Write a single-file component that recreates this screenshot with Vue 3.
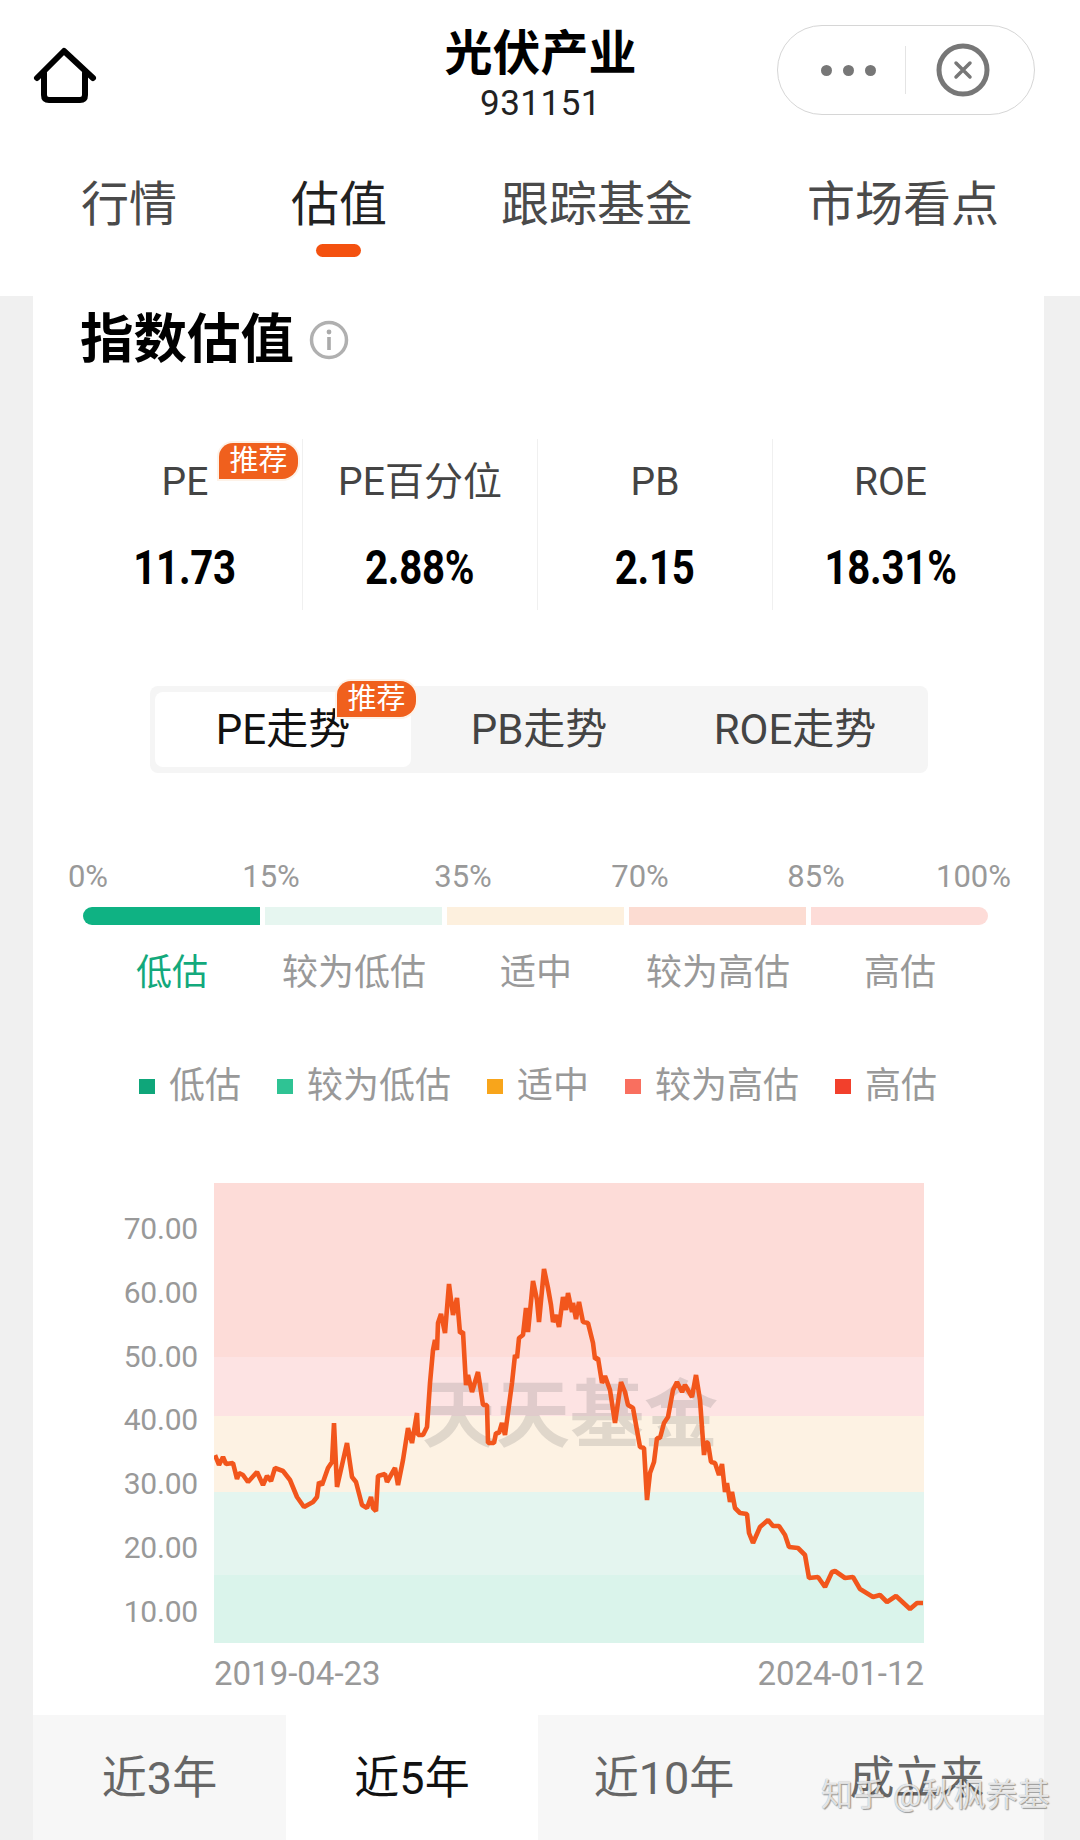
<script setup>
const tabs = [
  { label: '行情' },
  { label: '估值', active: true },
  { label: '跟踪基金' },
  { label: '市场看点' },
]
const metrics = [
  { label: 'PE', value: '11.73', badge: true },
  { label: 'PE百分位', value: '2.88%' },
  { label: 'PB', value: '2.15' },
  { label: 'ROE', value: '18.31%' },
]
const trends = [
  { label: 'PE走势', active: true, badge: true },
  { label: 'PB走势' },
  { label: 'ROE走势' },
]
const marks = [
  { t: '0%', gap: 0 },
  { t: '15%', gap: 111 },
  { t: '35%', gap: 120 },
  { t: '70%', gap: 105 },
  { t: '85%', gap: 104 },
  { t: '100%', gap: 84 },
]
const levels = ['低估', '较为低估', '适中', '较为高估', '高估']
const legend = [
  { t: '低估', c: '#0fa67a' },
  { t: '较为低估', c: '#2fc394' },
  { t: '适中', c: '#f8a51b' },
  { t: '较为高估', c: '#f96f5f' },
  { t: '高估', c: '#f2402c' },
]
const yTicks = ['70.00', '60.00', '50.00', '40.00', '30.00', '20.00', '10.00']
const ranges = [
  { t: '近3年' },
  { t: '近5年', active: true },
  { t: '近10年' },
  { t: '成立来' },
]
const raw = [
  215,1455, 219,1465, 223,1457, 226,1464, 233,1463, 237,1479, 239,1473, 243,1475, 248,1482,
  257,1472, 263,1485, 267,1476, 271,1481, 275,1468, 283,1471, 290,1480, 297,1497, 304,1507,
  313,1502, 317,1497, 319,1482, 322,1485, 328,1468, 332,1462, 334,1423, 337,1487, 347,1443,
  352,1477, 356,1482, 362,1505, 367,1508, 371,1497, 373,1508, 376,1511, 378,1476, 385,1474,
  387,1482, 395,1468, 398,1485, 403,1460, 408,1428, 412,1443, 417,1413, 418,1435, 423,1435,
  427,1427, 430,1383, 433,1350, 435,1340, 437,1350, 438,1323, 441,1314, 445,1333, 449,1284,
  453,1315, 457,1298, 460,1333, 463,1332, 466,1385, 468,1375, 472,1392, 478,1372, 483,1405,
  487,1405, 488,1443, 494,1443, 496,1433, 499,1433, 502,1423, 505,1435, 512,1383, 515,1355,
  517,1358, 519,1338, 523,1335, 526,1308, 528,1332, 533,1281, 537,1300, 539,1322, 544,1269,
  548,1288, 551,1305, 553,1322, 556,1315, 559,1327, 563,1297, 566,1310, 568,1293, 572,1312,
  573,1303, 576,1319, 579,1302, 583,1322, 588,1323, 593,1343, 595,1359, 598,1358, 602,1383,
  605,1376, 610,1390, 615,1423, 621,1382, 625,1392, 628,1405, 633,1408, 640,1447, 644,1448,
  647,1500, 650,1473, 654,1462, 657,1438, 660,1438, 664,1423, 668,1417, 673,1390, 677,1382,
  682,1392, 685,1385, 692,1397, 696,1375, 700,1400, 704,1455, 706,1442, 708,1443, 711,1462,
  715,1463, 719,1475, 722,1464, 725,1492, 727,1483, 730,1502, 732,1492, 735,1508, 740,1513,
  747,1514, 749,1533, 753,1543, 760,1527, 768,1520, 773,1526, 779,1526, 785,1535, 789,1547,
  798,1548, 805,1555, 809,1578, 818,1577, 825,1587, 832,1572, 835,1571, 845,1578, 853,1577,
  860,1589, 873,1597, 880,1595, 887,1602, 896,1596, 910,1609, 917,1603, 923,1603,
]
let pts = ''
for (let i = 0; i < raw.length; i += 2) pts += `${raw[i] - 214},${raw[i + 1] - 1183} `
</script>

<template>
  <div class="page">
    <header class="top">
      <div class="nav">
        <svg class="home" width="64" height="58" viewBox="0 0 64 58" fill="none" stroke="#000" stroke-width="6" stroke-linecap="round" stroke-linejoin="round">
          <path d="M4 32 L31 5 L60 32" />
          <path d="M11 27 V49 q0 5 5 5 H47 q5 0 5 -5 V27" />
        </svg>
        <div class="title">
          <div class="name">光伏产业</div>
          <div class="code">931151</div>
        </div>
        <div class="capsule">
          <div class="dots"><i></i><i></i><i></i></div>
          <span class="sep"></span>
          <svg width="54" height="54" viewBox="0 0 54 54" fill="none" stroke="#777" stroke-linecap="round">
            <circle cx="27" cy="27" r="24" stroke-width="5" />
            <path d="M20 20 L34 34 M34 20 L20 34" stroke-width="3.5" />
          </svg>
        </div>
      </div>
      <nav class="tabs">
        <div v-for="t in tabs" :key="t.label" class="tab" :class="{ on: t.active }">
          <span>{{ t.label }}</span>
          <i class="ind"></i>
        </div>
      </nav>
    </header>

    <main class="card">
      <div class="heading">
        <h2>指数估值</h2>
        <svg width="40" height="40" viewBox="0 0 40 40" fill="none">
          <circle cx="20" cy="20" r="17.5" stroke="#b0b0b0" stroke-width="3.5" />
          <circle cx="20" cy="12" r="2.4" fill="#aaa" />
          <rect x="18.2" y="17" width="3.6" height="13" fill="#aaa" />
        </svg>
      </div>

      <section class="metrics">
        <div v-for="m in metrics" :key="m.label" class="metric">
          <div class="m-label">{{ m.label }}</div>
          <div class="m-value"><span>{{ m.value }}</span></div>
          <span v-if="m.badge" class="badge b1">推荐</span>
        </div>
      </section>

      <section class="seg">
        <div v-for="t in trends" :key="t.label" class="seg-item" :class="{ on: t.active }">
          {{ t.label }}
          <span v-if="t.badge" class="badge b2">推荐</span>
        </div>
      </section>

      <div class="marks">
        <span v-for="m in marks" :key="m.t" class="mark" :style="{ marginLeft: m.gap + 'px' }">{{ m.t }}</span>
      </div>
      <div class="bar">
        <i class="s1"></i><i class="s2"></i><i class="s3"></i><i class="s4"></i><i class="s5"></i>
      </div>
      <div class="levels">
        <span v-for="(l, i) in levels" :key="l" :class="{ cur: i === 0 }">{{ l }}</span>
      </div>

      <div class="legend">
        <div v-for="l in legend" :key="l.t" class="lg">
          <i :style="{ background: l.c }"></i>{{ l.t }}
        </div>
      </div>

      <section class="chart">
        <div class="yaxis">
          <span v-for="y in yTicks" :key="y">{{ y }}</span>
        </div>
        <div class="plot">
          <div class="band b-a"></div>
          <div class="band b-b"></div>
          <div class="band b-c"></div>
          <div class="band b-d"></div>
          <div class="band b-e"></div>
          <div class="brand">天天基金</div>
          <svg class="line" width="710" height="460" viewBox="0 0 710 460" fill="none">
            <polyline :points="pts" stroke="#f2561c" stroke-width="4.6" stroke-linejoin="bevel" />
          </svg>
        </div>
      </section>
      <div class="dates"><span>2019-04-23</span><span>2024-01-12</span></div>

      <div class="ranges">
        <div v-for="r in ranges" :key="r.t" class="range" :class="{ on: r.active }">{{ r.t }}</div>
      </div>
    </main>

    <div class="zhihu">知乎 @秋枫养基</div>
  </div>
</template>

<style scoped>
.page {
  position: relative;
  width: 1080px;
  height: 1840px;
  overflow: hidden;
  background: #f0f0f0;
  font-family: Roboto, "Noto Sans CJK SC", sans-serif;
  color: #333;
}
.top {
  height: 296px;
  background: #fff;
}
.nav {
  height: 140px;
  display: grid;
  grid-template-columns: 1fr auto 1fr;
  align-items: start;
  padding: 0 45px 0 46px;
  box-sizing: border-box;
}
.home {
  margin: 46px 0 0 -13px;
}
.title {
  margin-top: 27px;
  text-align: center;
}
.name {
  font-size: 48px;
  line-height: 54px;
  font-weight: 700;
  color: #000;
}
.code {
  font-size: 35px;
  line-height: 36px;
  margin-top: 5px;
  color: #222;
  letter-spacing: 0.5px;
}
.capsule {
  justify-self: end;
  margin-top: 25px;
  width: 258px;
  height: 90px;
  box-sizing: border-box;
  border: 1px solid #d6d6d6;
  border-radius: 45px;
  display: flex;
  align-items: center;
  padding-left: 43px;
}
.dots {
  display: flex;
  gap: 11px;
}
.dots i {
  width: 11px;
  height: 11px;
  border-radius: 50%;
  background: #777;
}
.sep {
  width: 1px;
  height: 48px;
  background: #e4e4e4;
  margin-left: 29px;
  margin-right: 30px;
}
.tabs {
  display: flex;
  gap: 114px;
  padding: 35px 0 0 81px;
}
.tab {
  display: flex;
  flex-direction: column;
  align-items: center;
  font-size: 48px;
  line-height: 60px;
  color: #4a4a4a;
}
.tab .ind {
  width: 45px;
  height: 13px;
  margin-top: 9px;
  border-radius: 7px;
}
.tab.on {
  color: #222;
}
.tab.on .ind {
  background: #f4510f;
  transform: translateX(-1px);
}
.card {
  margin: 0 36px 0 33px;
  height: 1544px;
  background: #fff;
  display: flow-root;
}
.heading {
  display: flex;
  align-items: center;
  gap: 15px;
  height: 60px;
  margin: 14px 0 0 47px;
}
h2 {
  margin: 0;
  font-size: 53.5px;
  line-height: 60px;
  font-weight: 700;
  color: #000;
}
.metrics {
  display: grid;
  grid-template-columns: repeat(4, 235px);
  height: 171px;
  margin: 69px 0 0 35px;
}
.metric {
  position: relative;
  text-align: center;
  padding-top: 18px;
  border-right: 1px solid #f0f0f0;
}
.metric:last-child {
  border-right: 0;
}
.m-label {
  font-size: 39px;
  line-height: 50px;
  color: #444;
}
.m-value {
  margin-top: 31px;
  font-size: 49px;
  line-height: 60px;
  font-weight: 700;
  letter-spacing: -0.3px;
  color: #000;
}
.m-value span {
  display: inline-block;
  transform: scaleX(0.82);
}
.badge {
  position: absolute;
  width: 79px;
  height: 36px;
  line-height: 36px;
  text-align: center;
  font-size: 29px;
  font-weight: 400;
  letter-spacing: 0;
  color: #fff;
  background: #f0601d;
  border-radius: 14px 16px 16px 0;
  box-shadow: 0 0 0 2px #fdf2e8;
}
.b1 {
  left: 151px;
  top: 4px;
}
.b2 {
  left: 182px;
  top: -11px;
}
.seg {
  display: grid;
  grid-template-columns: repeat(3, 256px);
  width: 778px;
  height: 87px;
  box-sizing: border-box;
  margin: 76px 0 0 117px;
  padding: 6px 5px;
  background: #f5f5f5;
  border-radius: 8px;
}
.seg-item {
  position: relative;
  text-align: center;
  font-size: 42px;
  line-height: 75px;
  color: #444;
  border-radius: 8px;
}
.seg-item.on {
  background: #fff;
  color: #111;
}
.marks {
  display: flex;
  height: 40px;
  margin: 84px 0 0 19px;
}
.mark {
  flex: none;
  width: 72px;
  text-align: center;
  font-size: 31px;
  line-height: 40px;
  color: #999;
}
.bar {
  display: flex;
  gap: 5px;
  height: 18px;
  margin: 10px 0 0 50px;
}
.bar i {
  width: 177px;
}
.s1 {
  background: #0fb283;
  border-radius: 9px 0 0 9px;
}
.s2 {
  background: #e6f6f0;
}
.s3 {
  background: #fdf0de;
}
.s4 {
  background: #fcdcd2;
}
.s5 {
  background: #fddcd8;
  border-radius: 0 9px 9px 0;
}
.levels {
  display: grid;
  grid-template-columns: repeat(5, 182px);
  margin: 23px 0 0 48px;
  text-align: center;
  font-size: 36px;
  line-height: 50px;
  color: #999;
}
.levels .cur {
  color: #13a97c;
}
.legend {
  display: flex;
  gap: 36px;
  margin: 63px 0 0 106px;
}
.lg {
  display: flex;
  align-items: center;
  font-size: 36px;
  line-height: 50px;
  color: #999;
}
.lg i {
  width: 16px;
  height: 15px;
  margin-right: 14px;
}
.chart {
  display: flex;
  gap: 16px;
  margin-top: 72px;
}
.yaxis {
  width: 165px;
  display: flex;
  flex-direction: column;
  padding-top: 14px;
  text-align: right;
  font-size: 30px;
  line-height: 63.8px;
  letter-spacing: -0.2px;
  color: #999;
}
.plot {
  position: relative;
  width: 710px;
  height: 460px;
  display: flex;
  flex-direction: column;
}
.band {
  flex: none;
}
.b-a {
  height: 174px;
  background: #fddcd8;
}
.b-b {
  height: 59px;
  background: #fde3e3;
}
.b-c {
  height: 76px;
  background: #fdf2e3;
}
.b-d {
  height: 83px;
  background: #e4f5ef;
}
.b-e {
  height: 68px;
  background: #daf4eb;
}
.brand {
  position: absolute;
  left: 208px;
  top: 188px;
  font-size: 74px;
  line-height: 90px;
  font-weight: 700;
  white-space: nowrap;
  color: rgba(110, 110, 110, 0.2);
}
.line {
  position: absolute;
  left: 0;
  top: 0;
}
.dates {
  display: flex;
  justify-content: space-between;
  width: 710px;
  margin: 10px 0 0 181px;
  font-size: 33px;
  line-height: 40px;
  color: #999;
}
.ranges {
  display: grid;
  grid-template-columns: 253px 252px 252px 254px;
  height: 126px;
  margin-top: 21px;
  background: #f7f7f7;
}
.range {
  text-align: center;
  font-size: 45px;
  line-height: 128px;
  color: #666;
}
.range.on {
  background: #fff;
  color: #111;
}
.zhihu {
  position: absolute;
  left: 821px;
  top: 1775px;
  font-size: 32px;
  line-height: 40px;
  white-space: nowrap;
  color: rgba(255, 255, 255, 0.8);
  text-shadow: 1px 1px 1px rgba(0, 0, 0, 0.35), 0 0 1px rgba(0, 0, 0, 0.4);
}
</style>
